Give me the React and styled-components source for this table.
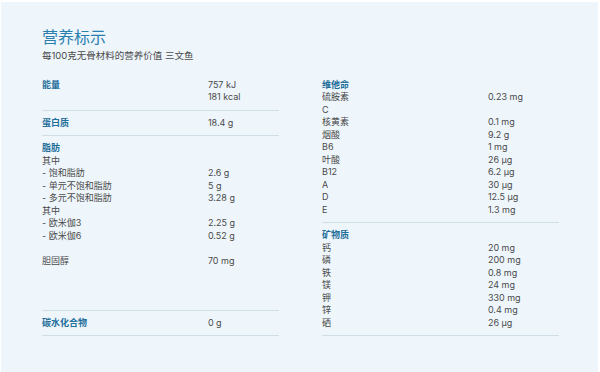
import React from 'react';
import styled, { createGlobalStyle } from 'styled-components';

const GlobalStyle = createGlobalStyle`
    html, body {
        margin: 0;
        padding: 0;
        background: #ffffff;
    }
    body {
        font-family: Inter, "Noto Sans CJK SC", sans-serif;
    }
`;

const Page = styled.div`
    margin: 2px 2px 0 1px;
    min-height: calc(100vh - 2px);
    box-sizing: border-box;
    background: #eef6fc;
    padding: 25px 39px 20px 41px;
`;

const Title = styled.h1`
    margin: 0;
    font-size: 16px;
    line-height: 20px;
    font-weight: 400;
    color: #2b7fae;
`;

const Subtitle = styled.p`
    margin: 2px 0 0;
    font-size: 9.5px;
    line-height: 14px;
    color: #4a4a4a;
`;

const Columns = styled.div`
    margin-top: 9.75px;
    display: grid;
    grid-template-columns: 237px 237px;
    column-gap: 43px;
    align-items: stretch;
`;

const Column = styled.div`
    display: flex;
    flex-direction: column;
`;

const Section = styled.div`
    padding: 6px 0;
    border-bottom: 1px solid #cfdde6;
    flex-grow: ${(p) => (p.$grow ? 1 : 0)};
`;

const Row = styled.div`
    display: grid;
    grid-template-columns: 70% 30%;
    height: 12.5px;
    font-size: 9px;
    line-height: 12.5px;
    color: #4a4a4a;
    white-space: nowrap;
`;

const Label = styled.span`
    font-weight: ${(p) => (p.$head ? 700 : 400)};
    color: ${(p) => (p.$head ? '#1f6e9a' : '#4a4a4a')};
`;

const Value = styled.span``;

const left = [
    [['能量', '757 kJ', true], ['', '181 kcal']],
    [['蛋白质', '18.4 g', true]],
    [
        ['脂肪', '', true],
        ['其中', ''],
        ['- 饱和脂肪', '2.6 g'],
        ['- 单元不饱和脂肪', '5 g'],
        ['- 多元不饱和脂肪', '3.28 g'],
        ['其中', ''],
        ['- 欧米伽3', '2.25 g'],
        ['- 欧米伽6', '0.52 g'],
        ['', ''],
        ['胆固醇', '70 mg'],
    ],
    [['碳水化合物', '0 g', true]],
];

const right = [
    [
        ['维他命', '', true],
        ['硫胺素', '0.23 mg'],
        ['C', ''],
        ['核黄素', '0.1 mg'],
        ['烟酸', '9.2 g'],
        ['B6', '1 mg'],
        ['叶酸', '26 µg'],
        ['B12', '6.2 µg'],
        ['A', '30 µg'],
        ['D', '12.5 µg'],
        ['E', '1.3 mg'],
    ],
    [
        ['矿物质', '', true],
        ['钙', '20 mg'],
        ['磷', '200 mg'],
        ['铁', '0.8 mg'],
        ['镁', '24 mg'],
        ['钾', '330 mg'],
        ['锌', '0.4 mg'],
        ['硒', '26 µg'],
    ],
];

const Table = ({ sections, growIndex }) => (
    <Column>
        {sections.map((rows, i) => (
            <Section key={i} $grow={i === growIndex}>
                {rows.map(([label, value, head], j) => (
                    <Row key={j}>
                        <Label $head={head}>{label}</Label>
                        <Value>{value}</Value>
                    </Row>
                ))}
            </Section>
        ))}
    </Column>
);

export default function App() {
    return (
        <>
            <GlobalStyle />
            <Page>
                <Title>营养标示</Title>
                <Subtitle>每100克无骨材料的营养价值 三文鱼</Subtitle>
                <Columns>
                    <Table sections={left} growIndex={2} />
                    <Table sections={right} growIndex={-1} />
                </Columns>
            </Page>
        </>
    );
}
